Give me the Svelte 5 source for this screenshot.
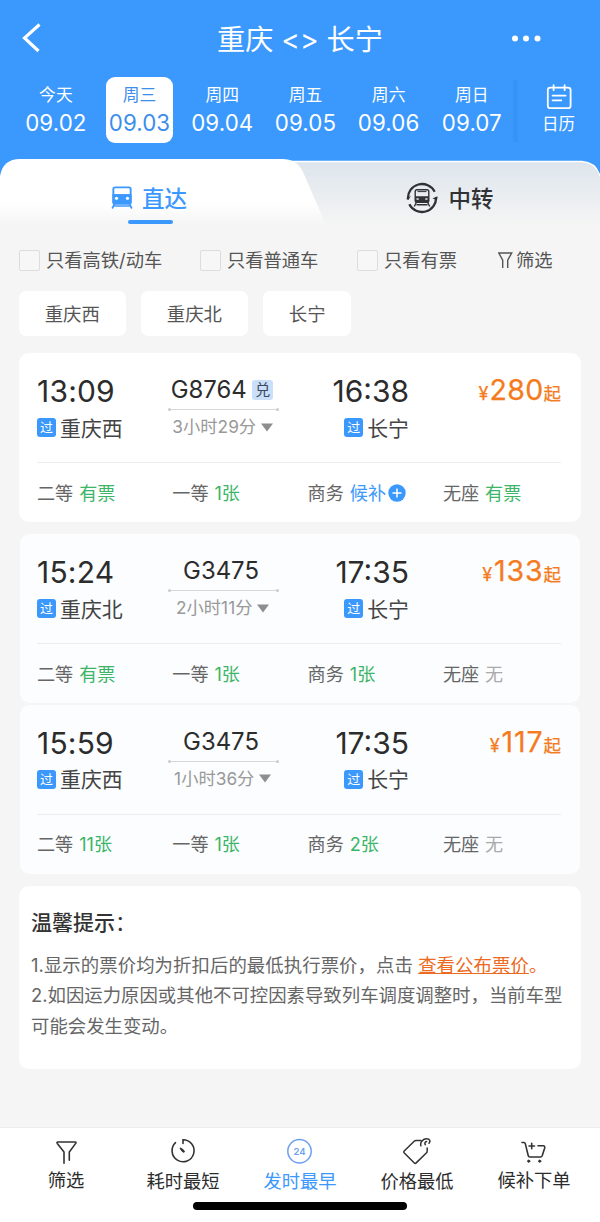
<script>
  const days = [
    { day: '今天', date: '09.02' },
    { day: '周三', date: '09.03', active: true },
    { day: '周四', date: '09.04' },
    { day: '周五', date: '09.05' },
    { day: '周六', date: '09.06' },
    { day: '周日', date: '09.07' }
  ];
  const stations = ['重庆西', '重庆北', '长宁'];
  const trains = [
    {
      dep: '13:09', from: '重庆西', no: 'G8764', redeem: true, dur: '3小时29分', arr: '16:38', to: '长宁', price: '280',
      seats: [['二等', '有票', 'ok'], ['一等', '1张', 'ok'], ['商务', '候补', 'wait'], ['无座', '有票', 'ok']]
    },
    {
      dep: '15:24', from: '重庆北', no: 'G3475', dur: '2小时11分', arr: '17:35', to: '长宁', price: '133',
      seats: [['二等', '有票', 'ok'], ['一等', '1张', 'ok'], ['商务', '1张', 'ok'], ['无座', '无', 'none']]
    },
    {
      dep: '15:59', from: '重庆西', no: 'G3475', dur: '1小时36分', arr: '17:35', to: '长宁', price: '117',
      seats: [['二等', '11张', 'ok'], ['一等', '1张', 'ok'], ['商务', '2张', 'ok'], ['无座', '无', 'none']]
    }
  ];
</script>

<div class="page">
  <header>
    <div class="titlebar">
      <svg class="back" width="20" height="30" viewBox="0 0 20 30"><path d="M18.500 1.500 3.500 15 17.500 28" fill="none" stroke="#fff" stroke-width="3.100" /></svg>
      <h1>重庆 &lt;&gt; 长宁</h1>
      <svg class="more" width="30" height="8" viewBox="0 0 30 8" fill="#fff"><circle cx="4" cy="3.500" r="3" /><circle cx="15" cy="3.500" r="3" /><circle cx="26.500" cy="3.500" r="3" /></svg>
    </div>
    <div class="dates">
      {#each days as d}
        <div class="date" class:active={d.active}>
          <span class="wd">{d.day}</span>
          <span class="num">{d.date}</span>
        </div>
      {/each}
      <div class="calendar">
        <svg width="26" height="26" viewBox="0 0 26 26" fill="none" stroke="#fff" stroke-width="1.800" stroke-linecap="round">
          <rect x="1.800" y="3.600" width="22.800" height="20.600" rx="2.500" /><path d="M7.600 1.200v5M18.600 1.200v5M6.600 11.600h13M6.600 16.400h8.600" />
        </svg>
        <span>日历</span>
      </div>
    </div>
  </header>

  <div class="tabs">
    <svg class="tabbg" width="600" height="66" viewBox="0 0 600 66">
      <defs>
        <linearGradient id="tw" x1="0" y1="0" x2="0" y2="1"><stop offset=".66" stop-color="#fff" /><stop offset="1" stop-color="#f5f5f5" /></linearGradient>
        <linearGradient id="tg" x1="0" y1="0" x2="0" y2="1"><stop offset="0" stop-color="#dde5ec" /><stop offset="1" stop-color="#f5f5f5" /></linearGradient>
      </defs>
      <path d="M0 0H600V26H0Z" fill="#3b98fc" />
      <path d="M200 66V2.500H582Q596 3.500 600 17V66Z" fill="url(#tg)" />
      <path d="M270 2.500H582Q596 3.500 600 17" fill="none" stroke="#fff" stroke-width="1.300" />
      <path d="M0 66V17Q3 0 20 0H282Q297 0 303 13L326 66Z" fill="url(#tw)" />
    </svg>
    <div class="tab on">
      <svg width="22" height="24" viewBox="0 0 22 24">
        <path d="M4 .5h14a2.600 2.600 0 0 1 2.600 2.600V16a2.600 2.600 0 0 1-2.600 2.600H4A2.600 2.600 0 0 1 1.400 16V3.100A2.600 2.600 0 0 1 4 .5ZM3.300 3v5.300h15.400V3a.8.8 0 0 0-.8-.8H4.100a.8.8 0 0 0-.8.800Z" fill="#3b98fc" fill-rule="evenodd" />
        <path d="M1.400 8.300h19.200v8a2.300 2.300 0 0 1-2.300 2.300H3.700a2.300 2.300 0 0 1-2.300-2.300Z" fill="#3b98fc" />
        <circle cx="5.500" cy="12.300" r="1.600" fill="#fff" /><circle cx="16.500" cy="12.300" r="1.600" fill="#fff" />
        <path d="M3.500 18 1.200 22.500M18.500 18l2.300 4.500M3.500 20h15" stroke="#3b98fc" stroke-width="1.700" fill="none" />
      </svg>
      <span>直达</span>
      <i class="bar"></i>
    </div>
    <div class="tab">
      <svg width="32" height="32" viewBox="0 0 32 32">
        <path d="M1.900 17A14.200 14.200 0 0 1 28.700 9.700M30.100 15A14.200 14.200 0 0 1 3.300 22.300" fill="none" stroke="#303236" stroke-width="2.300" />
        <path d="M.5 17.300 5 13.500 2.500 18ZM31.500 14.200 26.500 16.500 31 18Z" fill="#303236" />
        <rect x="9.200" y="7.700" width="13.600" height="12.600" rx="1.800" fill="none" stroke="#303236" stroke-width="1.400" />
        <path d="M9 14.200h14v5a1.800 1.800 0 0 1-1.800 1.800H10.800A1.800 1.800 0 0 1 9 19.200Z" fill="#303236" />
        <path d="M11.500 9.600h9" stroke="#303236" stroke-width="1" />
        <path d="M10.500 16.300h2.200v1.500h-2.200ZM19.300 16.300h2.200v1.500h-2.200Z" fill="#e4e9ef" />
        <path d="M10.300 20.500 8.300 24.500M21.700 20.500l2 4M10.500 22.700h11" stroke="#303236" stroke-width="1.400" />
      </svg>
      <span>中转</span>
    </div>
  </div>

  <div class="filters">
    <label class="f1"><i></i>只看高铁/动车</label>
    <label class="f2"><i></i>只看普通车</label>
    <label class="f3"><i></i>只看有票</label>
    <div class="sift">
      <svg width="15" height="17" viewBox="0 0 15 17" fill="none" stroke="#555" stroke-width="1.400"><path d="M4.700 16V8.200L.8 1H13.700L9.700 8.200V16" /></svg>
      筛选
    </div>
  </div>

  <div class="chips">
    {#each stations as s}<span>{s}</span>{/each}
  </div>

  <main>
    {#each trains as t, i}
      <section class="card" class:tinted={i > 0} class:joined={i === 2}>
        <div class="trip">
          <div class="dep">
            <div class="time">{t.dep}</div>
            <div class="place"><b>过</b><span>{t.from}</span></div>
          </div>
          <div class="mid">
            <div class="no" class:plain={!t.redeem}>{t.no}{#if t.redeem}<em>兑</em>{/if}</div>
            <div class="line"><i></i><i></i></div>
            <div class="dur">{t.dur}<svg width="12" height="9" viewBox="0 0 12 9"><path d="M0 .5H12L6 8.500Z" fill="#8e8e8e" /></svg></div>
          </div>
          <div class="arr">
            <div class="time">{t.arr}</div>
            <div class="place"><b>过</b><span>{t.to}</span></div>
          </div>
          <div class="price"><small>¥</small>{t.price}<span>起</span></div>
        </div>
        <div class="seats">
          {#each t.seats as [name, left, kind]}
            <div>{name}<span class={kind}>{left}</span>{#if kind === 'wait'}<svg width="18" height="18" viewBox="0 0 18 18"><circle cx="9" cy="9" r="8.700" fill="#3b98fc" /><path d="M9 4.500v9M4.500 9h9" stroke="#fff" stroke-width="1.500" /></svg>{/if}</div>
          {/each}
        </div>
      </section>
    {/each}

    <section class="tips">
      <h2>温馨提示<span>：</span></h2>
      <p>1.显示的票价均为折扣后的最低执行票价，点击 <a href="#fares">查看公布票价</a><span>。</span></p>
      <p>2.如因运力原因或其他不可控因素导致列车调度调整时，当前车型可能会发生变动。</p>
    </section>
  </main>

  <nav>
    <div class="item">
      <svg width="28" height="28" viewBox="0 0 28 28" fill="none" stroke="#333" stroke-width="1.600" stroke-linejoin="round" stroke-linecap="round"><path d="M12 25.300V14L5.300 5.400Q4.300 4 6 4H23Q24.700 4 23.700 5.400L17.300 14V22.300" /></svg>
      <span class="high">筛选</span>
    </div>
    <div class="item">
      <svg width="28" height="28" viewBox="0 0 28 28" fill="none" stroke="#333" stroke-width="1.600" stroke-linecap="round"><path d="M14 5.500V1.700A11 11 0 1 1 6.500 4.700M11.500 10.400 14.700 13.500" /><path d="m12.800 11.700 1.800 1.800" stroke-width="2.400" /></svg>
      <span>耗时最短</span>
    </div>
    <div class="item current">
      <svg width="28" height="28" viewBox="0 0 28 28"><circle cx="13.500" cy="13.300" r="11.700" fill="none" stroke="#6f9ff0" stroke-width="1.500" /><text x="13.500" y="16.800" text-anchor="middle" font-size="9.500" font-weight="600" fill="#6f9ff0">24</text></svg>
      <span>发时最早</span>
    </div>
    <div class="item">
      <svg width="28" height="28" viewBox="0 0 28 28" fill="none" stroke="#333" stroke-width="1.500" stroke-linejoin="round" stroke-linecap="round"><path d="M18 2.500H13Q12 2.500 11.200 3.300L1.200 13Q.4 14 1.300 15L11.300 25Q12.200 25.900 13.200 24.900L23.300 15Q24.200 14.200 24.200 13V10" /><path d="M17.900 7.700C16.800 4.200 20 .8 23.700.8 27 .8 27.700 3.500 26 5.300" /><path d="M23.600 3.500C22 3.700 21.300 5.700 22.300 6.600" /></svg>
      <span>价格最低</span>
    </div>
    <div class="item">
      <svg width="28" height="28" viewBox="0 0 28 28" fill="none" stroke="#333" stroke-width="1.600" stroke-linejoin="round" stroke-linecap="round"><path d="M2 4.500H4Q5 4.500 5.300 5.600L8.200 17.500Q8.500 19 9.900 19H20.500Q21.700 19 22.200 17.700L24.700 10Q25.200 7.800 23.200 7.800H18M9 8h5.500M11.700 5.300v5.400" /><circle cx="8.700" cy="23.200" r="1.100" fill="#333" stroke-width="1" /><circle cx="19.700" cy="23.200" r="1.100" fill="#333" stroke-width="1" /></svg>
      <span class="high">候补下单</span>
    </div>
    <i class="home"></i>
  </nav>
</div>

<style>
  :global(body) { margin: 0; }
  .page {
    width: 600px; height: 1222px; overflow: hidden;
    display: flex; flex-direction: column;
    background: #f5f5f5; color: #555;
    font-family: Inter, "Noto Sans CJK SC", sans-serif;
    font-size: 18.300px; line-height: 26px;
  }
  svg { display: block; flex: none; }
  header { height: 159px; background: #3b98fc; color: #fff; display: flex; flex-direction: column; }
  .titlebar { height: 77px; display: grid; grid-template-columns: 120px 1fr 120px; align-items: center; }
  .back { margin-left: 21px; margin-top: -2px; }
  h1 { margin: 2px 0 0; font-size: 28.200px; font-weight: 400; text-align: center; line-height: 40px; white-space: nowrap; }
  .more { margin-left: 31px; }
  .dates { display: flex; padding-left: 14.300px; height: 66px; }
  .date { width: 83.200px; display: flex; flex-direction: column; align-items: center; }
  .wd { font-size: 16.800px; line-height: 24px; margin-top: 6px; }
  .num { font-size: 22.300px; line-height: 28px; margin-top: 2px; letter-spacing: .1px; }
  .date.active { width: 67px; margin: 0 7.700px 0 8.500px; background: #fff; color: #3b8eea; border-radius: 9px; }
  .calendar { flex: 1; margin-left: 3.700px; padding-top: 7px; display: flex; flex-direction: column; align-items: center; font-size: 16.500px; }
  .calendar::before { content: ""; align-self: flex-start; width: 7px; height: 62px; margin: -4px 0 -58px -5px; background: linear-gradient(90deg, #3b98fc, #3591f4, #3b98fc); }
  .calendar svg { margin-bottom: 1px; }

  .tabs { position: relative; height: 66px; display: flex; }
  .tabbg { position: absolute; inset: 0; }
  .tab { position: relative; width: 300px; height: 80px; display: flex; align-items: center; justify-content: center; gap: 10px; font-size: 22.500px; font-weight: 500; color: #303236; }
  .tab.on { width: 298px; margin-right: 2px; color: #3b98fc; gap: 9px; }
  .tab svg { margin-top: -3px; }
  .tab span { line-height: 30px; }
  .bar { position: absolute; left: 128px; top: 61px; width: 45px; height: 4px; border-radius: 2px; background: #3b98fc; }

  .filters { display: flex; align-items: center; height: 26px; margin: 22px 0 0 19px; white-space: nowrap; }
  .filters label { display: flex; align-items: center; gap: 6px; }
  .filters label i { width: 19px; height: 19px; border: 1.500px solid #ddd; border-radius: 2px; background: #f7f7f7; }
  .f1 { width: 181px; }
  .f2 { width: 157px; }
  .f3 { width: 141px; }
  .sift { display: flex; align-items: center; gap: 3px; }

  .chips { display: flex; gap: 15.500px; margin: 18px 0 0 19px; }
  .chips span { height: 45px; line-height: 47px; padding: 0 25.700px; background: #fff; border-radius: 7px; font-size: 18.400px; }

  main { flex: 1; padding: 17px 19px 0; }
  .card { height: 169px; margin-bottom: 12px; border-radius: 10px; background: #fff; padding: 0 20px 0 18px; box-sizing: border-box; }
  .tinted { margin: 0 1px 1.500px; padding: 0 19px 0 17px; background: #fbfdfe; }
  .joined { margin-bottom: 12px; }
  .trip { display: flex; height: 109px; border-bottom: 1px solid #ededed; }
  .dep { width: 131px; }
  .time { height: 40px; line-height: 40px; margin-top: 18px; font-size: 30px; color: #2c2c2c; white-space: nowrap; }
  .dep .time { letter-spacing: .2px; }
  .place { display: flex; align-items: center; gap: 4px; height: 33px; font-size: 20.900px; color: #444; }
  .place span { padding-top: 2px; }
  .place b { width: 19px; height: 19px; border-radius: 3px; background: #3b98fc; color: #fff; font-size: 13px; font-weight: 400; line-height: 19px; text-align: center; }
  .mid { width: 111px; display: flex; flex-direction: column; align-items: center; }
  .no { margin-top: 19px; height: 36px; display: flex; align-items: center; font-size: 23.900px; line-height: 28px; color: #2c2c2c; white-space: nowrap; padding-right: 3px; }
  .no.plain { padding-right: 5px; }
  .no em { width: 21px; height: 20px; margin-left: 5.500px; background: #c9dffa; border-radius: 3px; font-style: normal; font-size: 15px; line-height: 20px; text-align: center; color: #3d4a5c; }
  .line { width: 100%; height: 3px; display: flex; justify-content: space-between; background: linear-gradient(#d8d8d8, #d8d8d8) 0 1px / 100% 1px no-repeat; }
  .line i { width: 3px; height: 3px; border-radius: 50%; background: #ccc; }
  .dur { display: flex; align-items: center; gap: 5px; height: 30px; margin-top: 1px; padding-right: 1.500px; font-size: 17.300px; color: #999; white-space: nowrap; }
  .arr { width: 130px; display: flex; flex-direction: column; align-items: flex-end; }
  .price { flex: 1; display: flex; justify-content: flex-end; align-items: baseline; height: 38px; line-height: 38px; margin-top: 18px; font-size: 28.500px; letter-spacing: .3px; color: #f47b20; -webkit-text-stroke: .25px #f47b20; }
  .tinted .price { letter-spacing: .9px; }
  .price small { font-size: 18px; margin-right: 1px; }
  .price span { font-size: 17.500px; letter-spacing: 0; }
  .seats { display: flex; height: 59px; }
  .seats div { width: 135.300px; flex: none; display: flex; align-items: center; white-space: nowrap; font-size: 18.100px; color: #666; }
  .seats div:last-child { width: auto; }
  .seats span { margin-left: 6px; }
  .ok { color: #3cb568; }
  .wait { color: #3b98fc; }
  .none { color: #aaa; }
  .seats svg { margin-left: 2px; }

  .tips { height: 183px; box-sizing: border-box; padding: 23px 12px 0; background: #fff; border-radius: 10px; color: #666; }
  h2 { margin: 0 0 13px; font-size: 21px; line-height: 28px; font-weight: 500; color: #333; }
  h2 span { font-weight: 400; }
  p { margin: 0; font-size: 18.400px; line-height: 30.500px; }
  p:first-of-type { letter-spacing: .06px; }
  a, p span { color: #ed6a22; }

  nav { position: relative; flex: none; height: 95px; padding: 10px 7.500px 0; box-sizing: border-box; display: flex; background: #fff; border-top: 1px solid #ececec; color: #2c2c2c; }
  .item { width: 117px; display: flex; flex-direction: column; align-items: center; font-size: 18.300px; }
  .item span { margin-top: 2px; }
  .item .high { margin-top: .5px; }
  .current { color: #3b98fc; }
  .home { position: absolute; left: 193px; top: 74px; width: 214px; height: 8px; border-radius: 4px; background: #000; }
</style>
